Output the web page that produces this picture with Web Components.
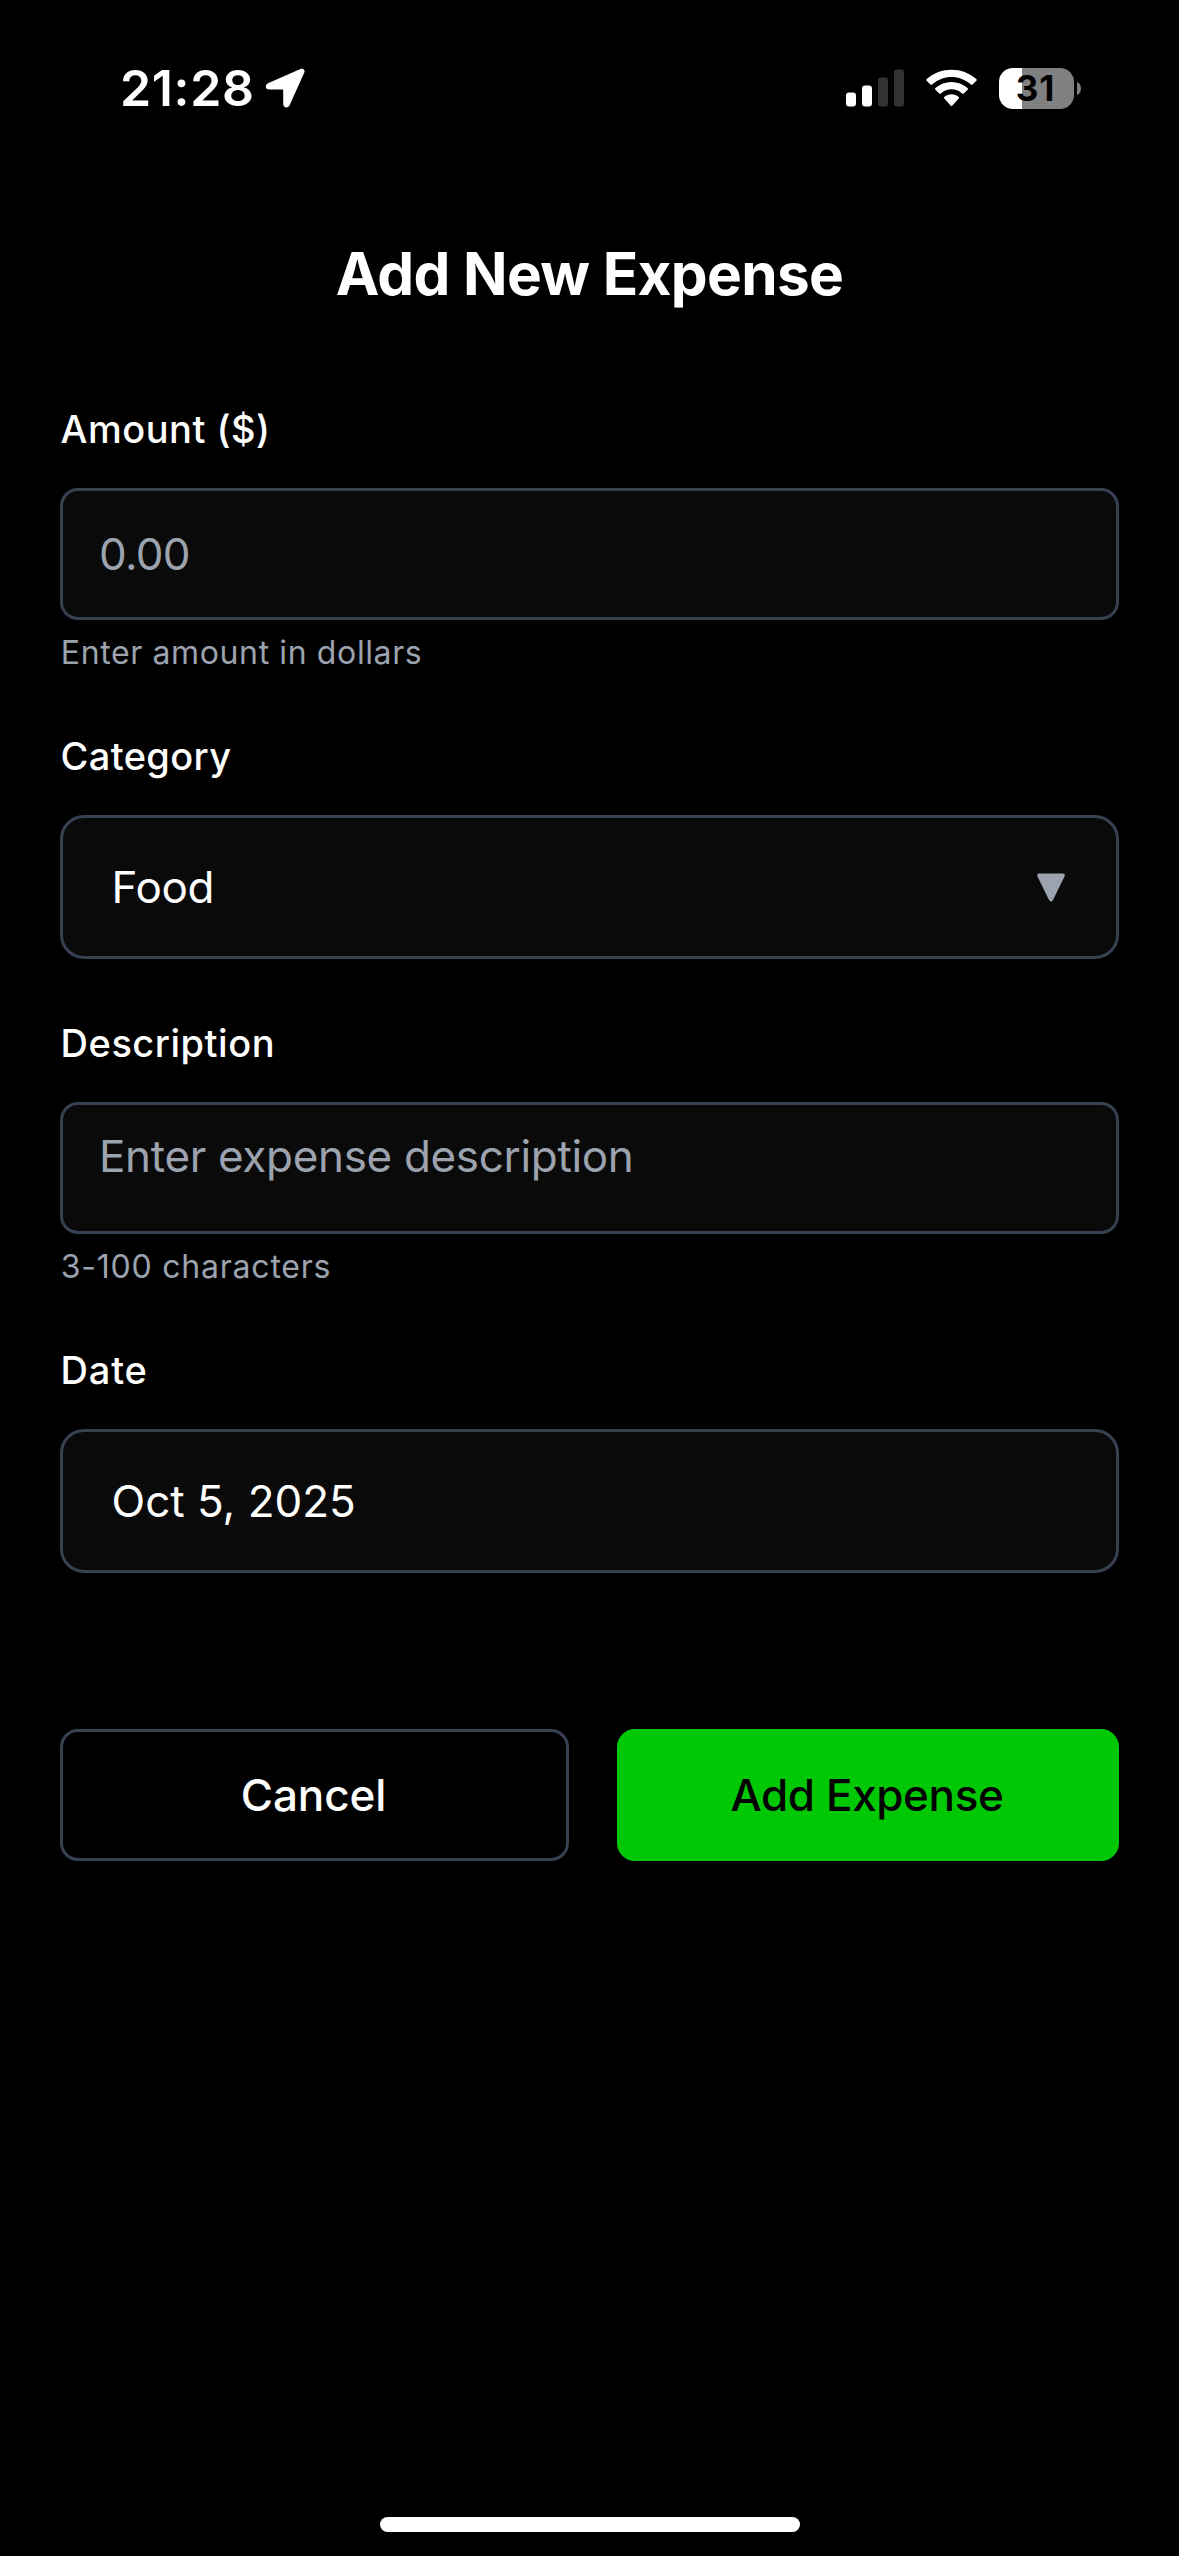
<!DOCTYPE html>
<html lang="en">
<head>
<meta charset="utf-8">
<title>Add New Expense</title>
<style>
  html, body { margin: 0; height: 100%; background: #000; }
  body { font-family: Inter, "Liberation Sans", sans-serif; color: #fff; }
</style>
</head>
<body>
<expense-screen>
  <status-bar slot="status" time="21:28" level="31"></status-bar>
  <span slot="title">Add New Expense</span>
  <form-field label="Amount ($)" hint="Enter amount in dollars" style="--label-spacing:.49px;--hint-spacing:.62px">
    <text-box style="--spacing:-.75px">0.00</text-box>
  </form-field>
  <form-field label="Category" style="--label-spacing:.36px">
    <select-box arrow style="--spacing:-.33px">Food</select-box>
  </form-field>
  <form-field label="Description" hint="3-100 characters" style="--label-spacing:.52px;--hint-spacing:.77px">
    <text-box multiline style="--spacing:-.33px">Enter expense description</text-box>
  </form-field>
  <form-field label="Date" style="--label-spacing:.8px">
    <select-box>Oct 5, 2025</select-box>
  </form-field>
  <action-button slot="actions" style="flex:0 0 509px;--spacing:-.11px">Cancel</action-button>
  <action-button slot="actions" primary style="flex:1;--spacing:-.37px">Add Expense</action-button>
</expense-screen>

<script>
const define = (name, render) => customElements.define(name, class extends HTMLElement {
  connectedCallback() {
    if (!this.shadowRoot) this.attachShadow({ mode: 'open' }).innerHTML = render(this);
  }
});

define('expense-screen', () => `
  <style>
    :host { display: flex; flex-direction: column; height: 2556px; width: 1179px; background: #000; overflow: hidden; }
    h1 { margin: 58px 0 0; font-size: 58.5px; font-weight: 700; line-height: 80px; letter-spacing: -.65px; text-align: center; }
    .form { display: flex; flex-direction: column; gap: 58px; padding: 89px 60px 0; }
    .actions { display: flex; gap: 48px; padding: 156px 60px 0; }
    .home { width: 420px; height: 15px; border-radius: 8px; background: #fff; margin: auto auto 24px; }
  </style>
  <slot name="status"></slot>
  <h1><slot name="title"></slot></h1>
  <div class="form"><slot></slot></div>
  <div class="actions"><slot name="actions"></slot></div>
  <div class="home"></div>`);

define('status-bar', el => `
  <style>
    :host { display: flex; justify-content: space-between; align-items: center; height: 176px; box-sizing: border-box; padding: 0 98px 0 120px; }
    .left, .right { display: flex; align-items: center; }
    .time { font-size: 50px; font-weight: 600; line-height: 60px; letter-spacing: .65px; }
    svg { display: block; }
    .arrow { margin-left: 10px; }
    .wifi { margin: 0 22px; }
    .battery { display: flex; align-items: center; gap: 3px; }
    .cell { width: 75px; height: 41px; border-radius: 14px; display: flex; align-items: center; justify-content: center;
      background: linear-gradient(90deg, #fff 23px, #808080 23px); color: #000; font-size: 35px; font-weight: 700; letter-spacing: .9px; line-height: 41px; text-indent: -2px; }
  </style>
  <div class="left">
    <span class="time">${el.getAttribute('time')}</span>
    <svg class="arrow" width="42" height="42" viewBox="0 0 42 42"><path fill="#fff" d="M35.400 2 3 16.200C-.400 17.800 .200 22.600 4.200 22.600H17.600Q18.200 22.600 18.200 23.200V37C18.200 41 23 41.600 24.600 38.200L39.200 5.800C40.400 2.800 38.400 .800 35.400 2Z"/></svg>
  </div>
  <div class="right">
    <svg width="58" height="38" viewBox="0 0 58 38">
      <rect x="0" y="23.5" width="10" height="14" rx="3" fill="#fff"/>
      <rect x="16" y="16.5" width="10" height="21" rx="3" fill="#fff"/>
      <rect x="32" y="8.5" width="10" height="29" rx="3" fill="#333"/>
      <rect x="48" y=".5" width="10" height="37" rx="3" fill="#333"/>
    </svg>
    <svg class="wifi" width="51" height="38" viewBox="0 0 51 38" fill="#fff">
      <path d="M.7 11.8a1.2 1.2 0 0 1 0-1.7C14.500-2.500 36.500-2.500 50.300 10.100a1.200 1.200 0 0 1 0 1.700L46.600 15.600a1.200 1.200 0 0 1-1.700 0C33.800 5.500 17.200 5.500 6.100 15.600a1.200 1.200 0 0 1-1.700 0Z"/>
      <path d="M9.400 20.700a1.200 1.200 0 0 1 0-1.700C18.400 10.900 32.600 10.900 41.600 19a1.200 1.200 0 0 1 0 1.700L37.800 24.400a1.200 1.200 0 0 1-1.700 0C30 19 21 19 14.900 24.400a1.200 1.200 0 0 1-1.700 0Z"/>
      <path d="M18.300 29.600a1.200 1.200 0 0 1 0-1.700C22.500 24.400 28.500 24.400 32.700 27.900a1.200 1.200 0 0 1 0 1.700L26.400 36.500a1.200 1.200 0 0 1-1.800 0Z"/>
    </svg>
    <div class="battery">
      <div class="cell">${el.getAttribute('level')}</div>
      <svg width="4" height="13" viewBox="0 0 4 13"><path fill="#808080" d="M0 0C5.300 2 5.300 11 0 13Z"/></svg>
    </div>
  </div>`);

define('form-field', el => `
  <style>
    :host { display: block; }
    .label { font-size: 38px; font-weight: 500; line-height: 53px; margin-bottom: 32px; padding-left: .6px; letter-spacing: var(--label-spacing, 0); }
    .hint { font-size: 32px; line-height: 41px; height: 40px; margin-top: 12px; padding-left: .8px; color: #9ca3af; letter-spacing: var(--hint-spacing, 0); }
  </style>
  <div class="label">${el.getAttribute('label')}</div>
  <slot></slot>
  ${el.hasAttribute('hint') ? `<div class="hint">${el.getAttribute('hint')}</div>` : ''}`);

define('text-box', () => `
  <style>
    :host { display: flex; align-items: center; box-sizing: border-box; height: 132px; padding: 0 36px; border: 3px solid #374151; border-radius: 18px;
      background: #0a0a0a; color: #9ca3af; font-size: 44px; line-height: 48px; letter-spacing: var(--spacing, 0); }
    :host([multiline]) { align-items: flex-start; padding-top: 27px; }
  </style><span><slot></slot></span>`);

define('select-box', el => `
  <style>
    :host { display: flex; align-items: center; justify-content: space-between; box-sizing: border-box; height: 144px; padding: 0 51px 0 48.5px;
      border: 3px solid #374151; border-radius: 24px; background: #0a0a0a; font-size: 44px; line-height: 48px; letter-spacing: var(--spacing, 0); }
  </style>
  <span><slot></slot></span>
  ${el.hasAttribute('arrow') ? '<svg width="28" height="29" viewBox="0 0 28 29"><path fill="#9ca3af" d="M2 .5H26Q28.600 .8 27.500 3.500L16 27Q14 30 12 27L.500 3.500Q-.600 .8 2 .5Z"/></svg>' : ''}`);

define('action-button', () => `
  <style>
    :host { display: flex; align-items: center; justify-content: center; box-sizing: border-box; height: 132px; padding-right: 2px; border: 3px solid #374151;
      border-radius: 18px; font-size: 44px; font-weight: 500; line-height: 48px; letter-spacing: var(--spacing, 0); }
    :host([primary]) { background: #00c805; border-color: #00c805; color: #000; }
  </style><span><slot></slot></span>`);
</script>
</body>
</html>
